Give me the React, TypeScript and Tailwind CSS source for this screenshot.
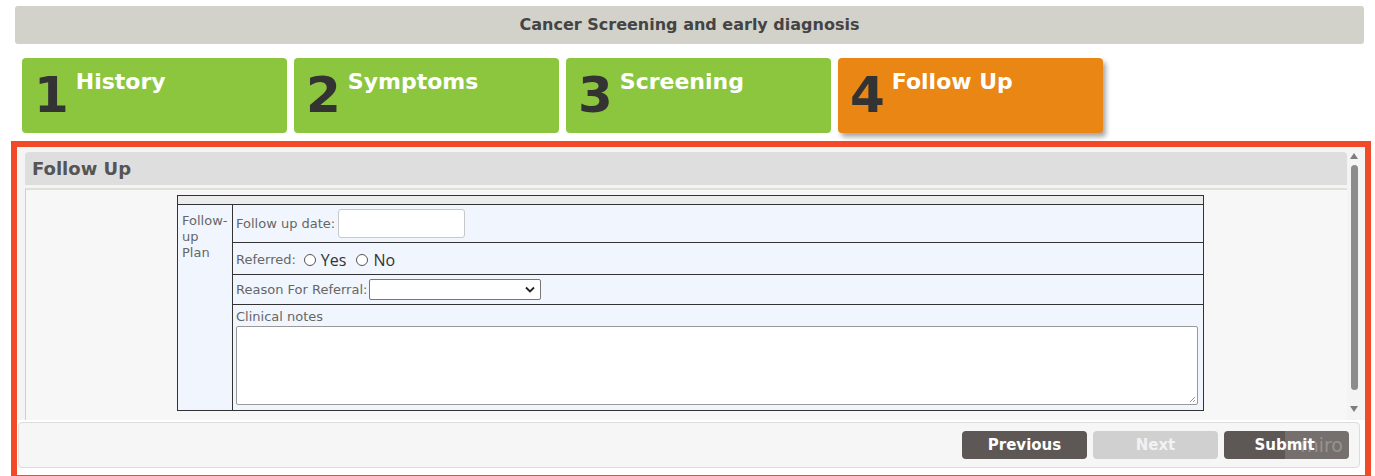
import React from 'react';

type Step = {
  num: number;
  label: string;
  active?: boolean;
};

const steps: Step[] = [
  {num: 1, label: 'History'},
  {num: 2, label: 'Symptoms'},
  {num: 3, label: 'Screening'},
  {num: 4, label: 'Follow Up', active: true}
];

function StepTab({num, label, active}: Step) {
  return (
    <div
      className={`w-[265px] h-[75px] rounded-[4px] flex items-start pl-[12px] ${
        active ? 'bg-[#e98614] shadow-[3px_4px_5px_rgba(0,0,0,0.35)]' : 'bg-[#8cc63f]'
      }`}
    >
      <span className="mt-[12px] text-[50px] leading-[50px] font-bold text-[#333333]">{num}</span>
      <span className="ml-[7px] mt-[10px] text-[22px] leading-[27px] font-bold text-white">{label}</span>
    </div>
  );
}

function Radio({label}: {label: string}) {
  return (
    <label className="flex items-center gap-[5px]">
      <span className="w-[12px] h-[12px] rounded-full border border-[#555] bg-white" />
      <span className="text-[16px] leading-[18px] text-[#333] font-['Open_Sans',sans-serif]">{label}</span>
    </label>
  );
}

function FollowUpTable() {
  return (
    <div className="ml-[151px] mt-[5px] w-[1027px] border border-[#333] bg-[#f1f6fe]">
      <div className="h-[9px] bg-[#ececec] border-b border-[#333]" />
      <div className="flex">
        <div className="w-[55px] border-r border-[#333] pl-[4px] pt-[8px] text-[13px] leading-[16px] text-[#666]">
          Follow-
          <br />
          up
          <br />
          Plan
        </div>
        <div className="flex-1 flex flex-col text-[13px] text-[#666]">
          <div className="h-[38px] border-b border-[#333] flex items-center pl-[3px] gap-[3px]">
            <span>Follow up date:</span>
            <div className="w-[127px] h-[29px] rounded-[3px] border border-[#c8c8c8] bg-white" />
          </div>
          <div className="h-[32px] border-b border-[#333] flex items-center pl-[3px] pt-[3px] gap-[8px]">
            <span>Referred:</span>
            <div className="flex items-center gap-[10px]">
              <Radio label="Yes" />
              <Radio label="No" />
            </div>
          </div>
          <div className="h-[30px] border-b border-[#333] flex items-center pl-[3px] gap-[2px]">
            <span>Reason For Referral:</span>
            <div className="w-[172px] h-[21px] rounded-[2px] border border-[#777] bg-white flex items-center justify-end pr-[5px]">
              <svg width="10" height="7" viewBox="0 0 10 7">
                <path d="M1 1.5 L5 5.5 L9 1.5" stroke="#222" strokeWidth="1.8" fill="none" />
              </svg>
            </div>
          </div>
          <div className="h-[105px] pl-[3px] pr-[5px] pt-[4px]">
            <div className="leading-[16px]">Clinical notes</div>
            <div className="relative mt-[1px] h-[79px] rounded-[2px] border border-[#999] bg-white">
              <svg className="absolute right-[1px] bottom-[1px]" width="8" height="8" viewBox="0 0 8 8">
                <path d="M7 2 L2 7 M7 5 L5 7" stroke="#999" strokeWidth="1" />
              </svg>
            </div>
          </div>
        </div>
      </div>
    </div>
  );
}

function Scrollbar() {
  return (
    <div className="w-[14px] mr-[4px] flex flex-col items-center pt-[6px] pb-[8px]">
      <svg width="8" height="6" viewBox="0 0 8 6">
        <path d="M4 0 L8 6 L0 6 Z" fill="#7d7d7d" />
      </svg>
      <div className="mt-[6px] w-[7px] flex-1 rounded-full bg-[#8c8c8c] mb-[16px]" />
      <svg width="8" height="6" viewBox="0 0 8 6">
        <path d="M0 0 L8 0 L4 6 Z" fill="#7d7d7d" />
      </svg>
    </div>
  );
}

export default function App() {
  return (
    <div className="w-[1375px] h-[476px] overflow-hidden bg-white font-['DejaVu_Sans',sans-serif]">
      {/* page title */}
      <div className="ml-[15px] mr-[11px] mt-[6px] h-[38px] rounded-[3px] bg-[#d2d1ca] flex items-center justify-center text-[16px] font-semibold text-[#444]">
        Cancer Screening and early diagnosis
      </div>

      {/* wizard steps */}
      <div className="mt-[14px] ml-[22px] flex gap-[7px]">
        {steps.map(s => (
          <StepTab key={s.num} {...s} />
        ))}
      </div>

      {/* current step panel */}
      <div className="ml-[11px] mr-[4px] mt-[8px] h-[340px] border-[6px] border-[#f14a29] bg-white flex flex-col">
        <div className="h-[273px] flex bg-[#f4f4f4]">
          <div className="flex-1 pl-[8px] pt-[5px] flex flex-col">
            <div className="h-[33px] rounded-t-[4px] bg-[#dedede] flex items-center pl-[7px] text-[18px] font-bold text-[#555]">
              Follow Up
            </div>
            <div className="mt-[3px] flex-1 border-t-2 border-l border-t-[#e0e0da] border-l-[#d0d0d0] bg-[#f7f7f7]">
              <FollowUpTable />
            </div>
          </div>
          <Scrollbar />
        </div>

        {/* footer buttons */}
        <div className="mt-[2px] ml-[1px] mr-[5px] h-[46px] rounded-[4px] border border-[#dcdcdc] bg-[#f6f6f6] flex items-center justify-end gap-[6px] pr-[10px]">
          <button className="w-[125px] h-[28px] rounded-[4px] bg-[#5d5755] text-white text-[15px] font-bold">
            Previous
          </button>
          <button className="w-[125px] h-[28px] rounded-[4px] bg-[#d0d0d0] text-[#f2f2f2] text-[15px] font-bold">
            Next
          </button>
          <button className="relative w-[125px] h-[28px] rounded-[4px] bg-[#5d5755] text-white text-[15px] font-bold overflow-hidden">
            <span className="relative pr-[4px]">Submit</span>
            <span className="absolute right-0 top-0 w-[64px] h-[28px] bg-white/15 flex items-center justify-end pr-[6px] text-[19px] font-normal text-white/25">
              miro
            </span>
          </button>
        </div>
      </div>
    </div>
  );
}
